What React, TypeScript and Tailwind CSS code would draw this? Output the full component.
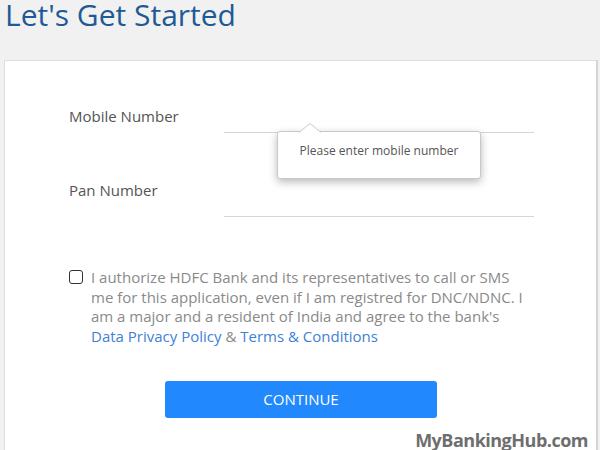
import React from 'react'

const font = { fontFamily: '"Open Sans", "Noto Sans", sans-serif' }

function Field({ label, mb, children }: { label: string; mb: string; children?: React.ReactNode }) {
  return (
    <div className="flex items-end">
      <div className={`w-[155px] text-[15px] leading-[22px] text-[#555] ${mb}`}>{label}</div>
      <div className="relative w-[310px] h-[34px] border-b border-[#d6d6d6]">{children}</div>
    </div>
  )
}

function Tooltip() {
  return (
    <div className="absolute left-[53px] top-[32px] w-[204px] h-[48px] bg-white border border-[#c9c9c9] rounded-[3px] shadow-[0_3px_8px_rgba(0,0,0,0.28)] flex items-start justify-center pt-[10px] text-[12px] leading-[18px] text-[#555] z-10">
      <svg className="absolute left-[21px] top-[-9px]" width="22" height="10" viewBox="0 0 22 10">
        <path d="M0 9.5 L11 0.5 L22 9.5" fill="white" stroke="#c9c9c9" strokeWidth="1" />
      </svg>
      Please enter mobile number
    </div>
  )
}

export default function App() {
  return (
    <div className="relative w-[600px] h-[450px] overflow-hidden bg-[#f1f1f1]" style={font}>
      <div className="h-[60px] pl-[5px]">
        <h1 className="text-[30px] leading-[29px] text-[#1f5a97]">Let's Get Started</h1>
      </div>

      <div className="ml-[4px] mr-[2px] h-[400px] bg-white border border-[#dedede] border-r-2 border-r-[#d4d4d4] pt-[38px] pl-[64px]">
        <Field label="Mobile Number" mb="mb-[6px]">
          <Tooltip />
        </Field>
        <div className="mt-[46px]">
          <Field label="Pan Number" mb="mb-[16px]" />
        </div>

        <div className="mt-[51px] flex items-start">
          <div className="mt-[2px] w-[14px] h-[14px] border border-[#333] rounded-[3px] shrink-0" />
          <p className="ml-[8px] w-[442px] text-[15px] leading-[19.7px] text-[#8a8a8a]">
            I authorize HDFC Bank and its representatives to call or SMS me for this application, even if I am registred for DNC/NDNC. I am a major and a resident of India and agree to the bank's{' '}
            <span className="text-[#3f80d8]">Data Privacy Policy</span> &amp;{' '}
            <span className="text-[#3f80d8]">Terms &amp; Conditions</span>
          </p>
        </div>

        <div className="mt-[34px] ml-[96px] w-[272px] h-[37px] rounded-[3px] bg-[#2189fd] flex items-center justify-center text-[15px] text-white">
          CONTINUE
        </div>
      </div>

      <div className="absolute right-[12px] bottom-0 text-[18px] leading-[20px] tracking-[-0.5px] font-bold text-[#6e6e6e]">
        MyBankingHub.com
      </div>
    </div>
  )
}
